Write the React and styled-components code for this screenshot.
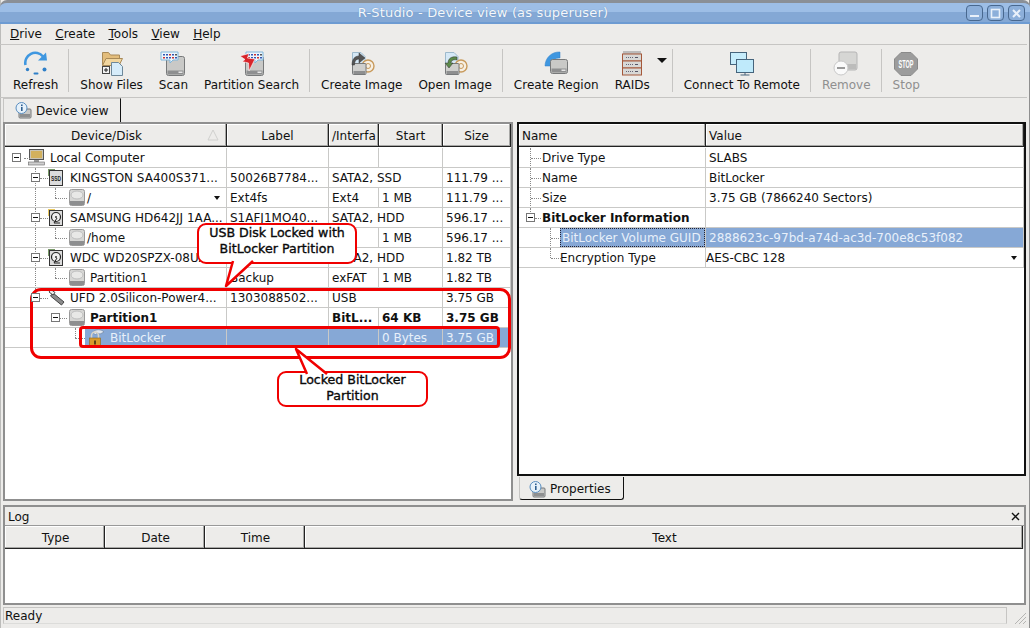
import React from "react";
import styled, { createGlobalStyle } from "styled-components";

const GlobalStyle = createGlobalStyle`
  html, body { margin: 0; padding: 0; background: #edecea; }
  * { box-sizing: border-box; }
`;

const Disk = ({ x = 4, y = 8, w = 18, h = 16, fill = "#c9c9c7" }) => (
  <g>
    <rect x={x} y={y} width={w} height={h} rx="2" fill={fill} stroke="#77797a" />
    <rect x={x + 1} y={y + h - 5} width={w - 2} height="4" fill="#8e8f90" />
    <rect x={x + w - 6} y={y + h - 4} width="4" height="1.5" fill="#e6e6e6" />
  </g>
);

const RefreshIcon = () => (
  <svg width="26" height="26" viewBox="0 0 26 26">
    <path d="M2.5 14 A10 10 0 0 1 20 5.5" fill="none" stroke="#3f97e0" strokeWidth="2.6" />
    <path d="M15 9.5 L24 9.5 L23 1.5 Z" fill="#3f97e0" />
    <circle cx="4.5" cy="18.5" r="1.7" fill="#2f7fc8" />
    <rect x="10.5" y="21.5" width="5" height="2" rx="1" fill="#2f7fc8" />
    <circle cx="21.5" cy="18.5" r="2" fill="#2f7fc8" />
  </svg>
);

const ShowFilesIcon = () => (
  <svg width="26" height="26" viewBox="0 0 26 26">
    <path d="M3.5 1.5 H9.5 L11.5 4 H20.5 V14 H3.5 Z" fill="#e3bd7c" stroke="#a98a58" />
    <path d="M3.5 14.5 L7 7.5 H23.5 L20 14.5 Z" fill="#f1d69f" stroke="#a98a58" />
    <path d="M12.5 11.5 H19.5 L23.5 15.5 V24.5 H12.5 Z" fill="#d6ecfa" stroke="#6d8799" />
    <rect x="3.5" y="15.5" width="7" height="7" fill="#f3f3f3" stroke="#444" />
    <path d="M5 19 H9 M7 17 V21" stroke="#222" />
  </svg>
);

const Bubble = ({ x = 1, y = 0 }) => (
  <g>
    <path
      d={`M${x} ${y + 1} H${x + 17} V${y + 9} H${x + 12} L${x + 9} ${y + 12} V${y + 9} H${x} Z`}
      fill="#eef6fc"
      stroke="#7fb6dc"
    />
    {[2, 5, 8, 11, 14].map((dx, i) => (
      <rect key={dx} x={x + dx} y={y + 3} width="2" height="1.5" fill={["#3157b5", "#3157b5", "#c33", "#3157b5", "#555"][i]} />
    ))}
    {[2, 5, 8, 11, 14].map((dx, i) => (
      <rect key={dx} x={x + dx} y={y + 6} width="2" height="1.5" fill={["#c33", "#3157b5", "#3157b5", "#c33", "#3157b5"][i]} />
    ))}
  </g>
);

const ScanIcon = () => (
  <svg width="26" height="26" viewBox="0 0 26 26">
    <Disk x={6.5} y={5.5} w={18} h={19} />
    <Bubble x={1} y={0} />
  </svg>
);

const SearchIcon = () => (
  <svg width="26" height="26" viewBox="0 0 26 26">
    <Disk x={6.5} y={5.5} w={18} h={19} />
    <Bubble x={7} y={0} />
    <path d="M1 5 L10 2.5 L8.5 7 L16 8 L10 20 L9.5 12 L3 10.5 L6 8.5 Z" fill="#d8242a" stroke="#fff" strokeWidth=".6" />
  </svg>
);

const ImageIcon = ({ arrow, back }) => (
  <svg width="26" height="26" viewBox="0 0 26 26">
    <path d="M3.5 1.5 H12 L16 5.5 V22 H3.5 Z" fill="#d5e8f6" stroke="#9db9cc" />
    <circle cx="19" cy="15" r="6" fill="#f6efe3" stroke="#c89a5c" strokeWidth="1.4" />
    <circle cx="19" cy="15" r="2.5" fill="none" stroke="#c89a5c" />
    <rect x="3.5" y="12.5" width="13.5" height="11" rx="1" fill="#cfcfcd" stroke="#77797a" />
    <rect x="4.5" y="20" width="11.5" height="3" fill="#8e8f90" />
    <path
      d={back ? "M15 6 C9 5 6 8 6 12 H3 L7 17 L11 12 H9 C9 10 11 8 15 9 Z" : "M3 14 C3 8 6 5 10 5 V2 L16 7 L10 12 V8 C7 8 5.5 10 5.5 14 Z"}
      fill={arrow}
      stroke="#333"
      strokeWidth=".5"
    />
  </svg>
);

const RegionIcon = () => (
  <svg width="26" height="26" viewBox="0 0 26 26">
    <path d="M2 15 A14 14 0 0 1 17 1 V7 A8 8 0 0 0 8 15 Z" fill="#3f97e0" stroke="#2f7fc8" strokeWidth=".5" />
    <Disk x={7.5} y={8.5} w={17} h={14} />
  </svg>
);

const RaidIcon = () => (
  <svg width="26" height="26" viewBox="0 0 26 26">
    <rect x="4" y="0" width="18" height="3" fill="#bbb" />
    {[3, 10, 17].map((y) => (
      <g key={y}>
        <rect x="3.5" y={y} width="19" height="7" fill="#d8d8d6" stroke="#a5583a" />
        <path d={`M7 ${y + 3.5} H14`} stroke="#667" strokeDasharray="1 1" />
        <path d={`M16 ${y + 3.5} H19`} stroke="#556" />
      </g>
    ))}
  </svg>
);

const RemoteIcon = () => (
  <svg width="26" height="26" viewBox="0 0 26 26">
    <rect x="1.5" y="1.5" width="16" height="12" fill="#c6ecfb" stroke="#46647c" />
    <rect x="7.5" y="8.5" width="17" height="13" fill="#bfeafb" stroke="#46647c" />
    <path d="M16 21 V24 M11.5 24 H20.5" stroke="#46647c" />
  </svg>
);

const RemoveIcon = () => (
  <svg width="26" height="26" viewBox="0 0 26 26">
    <rect x="6" y="1" width="18" height="18" rx="2" fill="#d6d6d4" stroke="#b5b5b5" />
    <rect x="7" y="13" width="16" height="5" fill="#bcbcbb" />
    <circle cx="8" cy="17" r="7" fill="#fafafa" stroke="#c9c9c9" />
    <rect x="4" y="16" width="8" height="2" fill="#9a9a9a" />
  </svg>
);

const StopIcon = () => (
  <svg width="26" height="26" viewBox="0 0 26 26">
    <path d="M8 1.5 H18 L24.5 8 V18 L18 24.5 H8 L1.5 18 V8 Z" fill="#9c9c9c" stroke="#8a8a8a" />
    <text
      x="23.6"
      y="17"
      transform="scale(.55 1)"
      textAnchor="middle"
      fontSize="10"
      fontWeight="700"
      fontFamily="Liberation Sans, sans-serif"
      fill="#fff"
    >
      STOP
    </text>
  </svg>
);

const InfoDiskIcon = () => (
  <svg width="17" height="17" viewBox="0 0 17 17">
    <rect x="4" y="7" width="12" height="9" rx="1" fill="#c9c9c7" stroke="#77797a" />
    <rect x="5" y="12" width="10" height="3" fill="#8e8f90" />
    <circle cx="6.5" cy="6" r="5.5" fill="#e6f1fa" stroke="#5a8ec0" />
    <rect x="6" y="5" width="1.6" height="4" fill="#2f5f90" />
    <rect x="6" y="2.5" width="1.6" height="1.6" fill="#2f5f90" />
  </svg>
);

const ComputerIcon = () => (
  <svg width="17" height="17" viewBox="0 0 17 17">
    <rect x="1.5" y="0.5" width="14" height="10" fill="#c9c5b8" stroke="#555" />
    <rect x="3" y="2" width="11" height="7" fill="#d2b15e" />
    <rect x="6" y="11" width="5" height="2" fill="#999" />
    <rect x="0.5" y="13" width="16" height="3" fill="#cfcfcf" stroke="#666" strokeWidth=".6" />
  </svg>
);

const DriveIcon = ({ ssd, tint }) => (
  <svg width="16" height="17" viewBox="0 0 16 17">
    <rect x="0" y="0" width="7" height="7" fill={tint} />
    <rect x="1.5" y="1.5" width="13" height="15" fill="#dcdcdc" stroke="#333" />
    {ssd ? (
      <text
        x="12.3"
        y="12"
        transform="scale(.65 1)"
        textAnchor="middle"
        fontSize="7.5"
        fontWeight="700"
        fontFamily="Liberation Sans, sans-serif"
        fill="#222"
      >
        SSD
      </text>
    ) : (
      <g>
        <circle cx="8" cy="8" r="4.5" fill="#f0f0f0" stroke="#222" strokeWidth="1.2" />
        <circle cx="8" cy="8" r="1" fill="#333" />
        <path d="M12 14 H6 L9 9" fill="none" stroke="#222" />
      </g>
    )}
  </svg>
);

const PartitionIcon = () => (
  <svg width="17" height="17" viewBox="0 0 17 17">
    <rect x="1.5" y="0.5" width="15" height="16" rx="2" fill="#d6d6d4" stroke="#9a9a9a" />
    <ellipse cx="9" cy="6" rx="6" ry="4" fill="#e8e8e6" stroke="#bdbdbd" />
    <rect x="2" y="12" width="14" height="4" fill="#8e8f90" />
  </svg>
);

const UsbIcon = () => (
  <svg width="18" height="17" viewBox="0 0 18 17">
    <path d="M5 4 L16 13 L13.5 16 L2.5 7 Z" fill="#8c8c8c" stroke="#444" />
    <path d="M1 3 L3 0.5 L7 3.5 L5 6 Z" fill="#eee" stroke="#444" />
  </svg>
);

const LockIcon = () => (
  <svg width="18" height="18" viewBox="0 0 18 18">
    <path d="M6 3 C9 0 14 0 17 3 L13 5 C11 4 10 4 8 6 Z" fill="#dfe7f2" stroke="#6b7f99" strokeWidth=".6" />
    <path d="M4.5 9 V6.5 A3.5 3.5 0 0 1 11.5 6.5 V9" fill="none" stroke="#d8d4c8" strokeWidth="1.6" />
    <rect x="2.5" y="9" width="11" height="8.5" fill="#d89a2c" stroke="#8a6420" strokeWidth=".6" />
    <rect x="7" y="11.5" width="2" height="4" fill="#5c4316" />
  </svg>
);

const Window = styled.div`
  position: relative;
  width: 1030px;
  height: 628px;
  overflow: hidden;
  display: flex;
  flex-direction: column;
  background: #edecea;
  box-shadow: inset 1px 0 #bcbcba, inset -1px 0 #8f8f8f;
  font-family: "DejaVu Sans", sans-serif;
  font-size: 12px;
  color: #111;
`;

const TitleBar = styled.div`
  position: relative;
  height: 24px;
  flex: none;
  display: flex;
  align-items: center;
  justify-content: center;
  border-top: 3px solid #8a8f96;
  border-bottom: 2px solid #6d9bd2;
  border-radius: 7px 7px 0 0;
  background: linear-gradient(#9dbee6 0 45%, #84a8d5 45% 100%);
  color: #f4f8fc;
  font-size: 13px;
  letter-spacing: 0.17px;
  padding: 0 64px 1px 0;
  text-shadow: 0 0 1px #5f86b5;
`;

const WindowButtons = styled.div`
  position: absolute;
  right: 5px;
  top: 2px;
  display: flex;
  gap: 4px;
`;

const WindowButton = styled.div`
  width: 17px;
  height: 16px;
  border: 1px solid #48688f;
  border-radius: 4px;
  background: #8cafda;
  display: flex;
  align-items: center;
  justify-content: center;
`;

const MenuBar = styled.div`
  height: 20px;
  flex: none;
  display: flex;
  align-items: center;
  gap: 13.3px;
  padding-left: 10px;
`;

const Toolbar = styled.div`
  height: 54px;
  flex: none;
  display: flex;
  align-items: stretch;
  padding: 4px 0 5px 5px;
  border-top: 1px solid #c6c5c3;
  border-bottom: 1px solid #c6c5c3;
  margin: 0 3px 0 0;
`;

const ToolButton = styled.div`
  display: flex;
  flex-direction: column;
  align-items: center;
  justify-content: space-between;
  padding: 2px 8px 0;
  white-space: nowrap;
  color: ${(p) => (p.$disabled ? "#8f8f8f" : "#111")};
`;

const Separator = styled.div`
  width: 1px;
  margin: 0 3px 0 2px;
  background: #c6c5c3;
`;

const DropArrow = styled.div`
  align-self: center;
  margin: 0 3px 20px -1px;
  width: 0;
  height: 0;
  border-left: 5px solid transparent;
  border-right: 5px solid transparent;
  border-top: 5px solid #111;
`;

const TabStrip = styled.div`
  height: 24px;
  flex: none;
  padding: 0 0 0 3px;
  display: flex;
`;

const Tab = styled.div`
  height: 24px;
  display: flex;
  align-items: center;
  gap: 4px;
  padding: 0 11px;
  background: #edecea;
  border-top: 1px solid #c6c5c3;
  border-left: 1px solid #c6c5c3;
  border-right: 1px solid #111;
`;

const Panes = styled.div`
  height: 379px;
  flex: none;
  display: flex;
  gap: 4px;
  padding-left: 3px;
`;

const DevicePanel = styled.div`
  width: 510px;
  height: 379px;
  border: 2px solid #8f8f8f;
  background: #fff;
`;

const RightColumn = styled.div`
  width: 509px;
  display: flex;
  flex-direction: column;
  gap: 1px;
`;

const PropsPanel = styled.div`
  height: 354px;
  flex: none;
  border: 2px solid #111;
  background: #fff;
`;

const BottomTabs = styled.div`
  display: flex;
  padding-left: 2px;
`;

const BottomTab = styled(Tab)`
  height: 23px;
  width: 105px;
  padding: 2px 0 0 9px;
  border-top: none;
  border-bottom: 1px solid #111;
  border-radius: 0 0 3px 3px;
  justify-content: flex-start;
`;

const HeaderRow = styled.div`
  display: grid;
  grid-template-columns: ${(p) => p.$cols};
  height: 23px;
  margin-bottom: 1px;
  border-bottom: 1px solid #222;
  background: #edecea;
`;

const HeaderCell = styled.div`
  position: relative;
  display: flex;
  align-items: center;
  justify-content: ${(p) => (p.$left ? "flex-start" : "center")};
  padding-top: 2px;
  padding-left: ${(p) => (p.$left ? "3px" : "0")};
  padding-right: ${(p) => p.$right ?? 0}px;
  border-right: 1px solid #222;
  box-shadow: inset -1px -1px 0 #a8a8a6, inset 1px 1px 0 #fff;
  overflow: hidden;
  white-space: nowrap;
`;

const LogHeaderCell = styled(HeaderCell)`
  padding-left: 2px;
`;

const SortMark = styled.svg`
  position: absolute;
  right: 7px;
  top: 5px;
`;

const Row = styled.div`
  display: grid;
  grid-template-columns: ${(p) => p.$cols};
  height: 20px;
  border-bottom: 1px solid #c9c9c7;
  font-weight: ${(p) => (p.$bold ? 700 : 400)};
`;

const Cell = styled.div`
  position: relative;
  display: flex;
  align-items: center;
  grid-column: ${(p) => (p.$wide ? "span 2" : "auto")};
  padding-left: ${(p) => p.$pad ?? 3}px;
  border-right: 1px solid #c9c9c7;
  white-space: nowrap;
  overflow: hidden;
  background: ${(p) => (p.$selected ? "#86a8d6" : "transparent")};
  color: ${(p) => (p.$selected ? "#e8f0fa" : "inherit")};
`;

const TreeCell = styled(Cell)`
  padding-left: ${(p) => p.$left}px;
`;

const TreeLabel = styled.span`
  align-self: stretch;
  flex: 1;
  display: flex;
  align-items: center;
  gap: ${(p) => p.$gap}px;
  padding-left: 2px;
  background: ${(p) => (p.$selected ? "#86a8d6" : "transparent")};
  color: ${(p) => (p.$selected ? "#e8f0fa" : "inherit")};
`;

const SelectedName = styled.span`
  align-self: stretch;
  display: flex;
  align-items: center;
  flex: 1;
  padding-left: 2px;
  background: #86a8d6;
  color: #e8f0fa;
  outline: 1px dotted #223;
  outline-offset: -1px;
`;

const Expander = styled.span`
  position: absolute;
  left: ${(p) => p.$x}px;
  top: 5px;
  width: 9px;
  height: 9px;
  border: 1px solid #777;
  background: #fff;
  z-index: 1;

  &::after {
    content: "";
    position: absolute;
    left: 1px;
    right: 1px;
    top: 3px;
    height: 1px;
    background: #111;
  }
`;

const GuideV = styled.span`
  position: absolute;
  left: ${(p) => p.$x}px;
  top: 0;
  height: ${(p) => p.$h ?? 20}px;
  border-left: 1px dotted #888;
`;

const GuideH = styled.span`
  position: absolute;
  left: ${(p) => p.$x}px;
  top: 10px;
  width: ${(p) => p.$w}px;
  border-top: 1px dotted #888;
`;

const CellArrow = styled.span`
  position: absolute;
  right: 6px;
  top: 8px;
  width: 0;
  height: 0;
  border-left: 3px solid transparent;
  border-right: 3px solid transparent;
  border-top: 4px solid #111;
`;

const LogPanel = styled.div`
  margin: 4px 4px 0 3px;
  height: 100px;
  flex: none;
  border: 2px solid #8f8f8f;
  display: flex;
  flex-direction: column;
`;

const LogTitle = styled.div`
  height: 19px;
  flex: none;
  display: flex;
  align-items: center;
  justify-content: space-between;
  padding: 1px 4px 0 3px;
  border-bottom: 1px solid #999;
`;

const LogBody = styled.div`
  flex: 1;
  background: #fff;
`;

const LogHeader = styled(HeaderRow)`
  grid-template-columns: 100px 100px 100px 1fr;
  margin: 0 1px 0 0;
`;

const StatusBar = styled.div`
  margin: 2px 0 0 3px;
  height: 17px;
  width: 1004px;
  flex: none;
  display: flex;
  align-items: center;
  padding-left: 1px;
  border: 1px solid #c6c5c3;
  border-bottom-color: #dcdcda;
`;

const Grip = styled.svg`
  position: absolute;
  right: 3px;
  bottom: 3px;
`;

const Marker = styled.div`
  position: absolute;
  left: ${(p) => p.$x}px;
  top: ${(p) => p.$y}px;
  width: ${(p) => p.$w}px;
  height: ${(p) => p.$h}px;
  border: 3px solid #f00000;
  border-radius: ${(p) => p.$r}px;
  pointer-events: none;
`;

const Callout = styled.div`
  position: absolute;
  left: ${(p) => p.$x}px;
  top: ${(p) => p.$y}px;
  width: ${(p) => p.$w}px;
  height: ${(p) => p.$h}px;
  padding-bottom: ${(p) => p.$lift}px;
  display: flex;
  align-items: center;
  justify-content: center;
  text-align: center;
  background: #fff;
  border: 2.5px solid #f00000;
  border-radius: 9px;
  font-size: 12.6px;
  -webkit-text-stroke: 0.35px #0a0a0a;
  line-height: 16px;
  color: #0a0a0a;
`;

const Tail = styled.svg`
  position: absolute;
  overflow: visible;
  left: ${(p) => p.$x}px;
  top: ${(p) => p.$y}px;
`;

const treeCols = "222px 102px 50px 64px 1fr";
const propCols = "187px 1fr";

const Toolbuttons = [
  [<RefreshIcon />, "Refresh"],
  "sep",
  [<ShowFilesIcon />, "Show Files"],
  [<ScanIcon />, "Scan"],
  [<SearchIcon />, "Partition Search"],
  "sep",
  [<ImageIcon arrow="#555" />, "Create Image"],
  [<ImageIcon arrow="#5c8a4a" back />, "Open Image"],
  "sep",
  [<RegionIcon />, "Create Region"],
  [<RaidIcon />, "RAIDs"],
  "arrow",
  "sep",
  [<RemoteIcon />, "Connect To Remote"],
  "sep",
  [<RemoveIcon />, "Remove", true],
  "sep",
  [<StopIcon />, "Stop", true],
];

const DeviceRows = [
  { icon: <ComputerIcon />, name: "Local Computer", left: 21, gap: 5, exp: 11, hline: [19, 6], vlines: [], cells: ["", "", "", ""] },
  { icon: <DriveIcon ssd tint="#7a9a6a" />, name: "KINGSTON SA400S371...", left: 41, gap: 6, exp: 30, hline: [35, 8], vlines: [[30, 20]], cells: ["50026B7784...", "SATA2, SSD", "", "111.79 ..."], span: true },
  { icon: <PartitionIcon />, name: "/", left: 61, gap: 2, hline: [50, 12], vlines: [[30, 20], [50, 10]], cells: ["Ext4fs", "Ext4", "1 MB", "111.79 ..."], arrow: true },
  { icon: <DriveIcon tint="#e8c860" />, name: "SAMSUNG HD642JJ 1AA...", left: 41, gap: 6, exp: 30, hline: [35, 8], vlines: [[30, 20]], cells: ["S1AFJ1MO40...", "SATA2, HDD", "", "596.17 ..."], span: true },
  { icon: <PartitionIcon />, name: "/home", left: 61, gap: 2, hline: [50, 12], vlines: [[30, 20], [50, 10]], cells: ["", "", "1 MB", "596.17 ..."] },
  { icon: <DriveIcon tint="#7a9a6a" />, name: "WDC WD20SPZX-08UA...", left: 41, gap: 6, exp: 30, hline: [35, 8], vlines: [[30, 20]], cells: ["", "SATA2, HDD", "", "1.82 TB"], span: true },
  { icon: <PartitionIcon />, name: "Partition1", left: 61, gap: 5, hline: [50, 12], vlines: [[30, 20], [50, 10]], cells: ["Backup", "exFAT", "1 MB", "1.82 TB"] },
  { icon: <UsbIcon />, name: "UFD 2.0Silicon-Power4...", left: 41, gap: 4, exp: 30, hline: [35, 8], vlines: [[30, 10]], cells: ["1303088502...", "USB", "", "3.75 GB"], span: true },
  { icon: <PartitionIcon />, name: "Partition1", left: 61, gap: 5, exp: 50, hline: [55, 7], vlines: [], cells: ["", "BitL...", "64 KB", "3.75 GB"], bold: true },
  { icon: <LockIcon />, name: "BitLocker", left: 80, gap: 5, hline: [70, 10], vlines: [[70, 10]], cells: ["", "", "0 Bytes", "3.75 GB"], selected: true },
];

const PropRows = [
  { name: "Drive Type", value: "SLABS", level: 1, guide: 11 },
  { name: "Name", value: "BitLocker", level: 1, guide: 11 },
  { name: "Size", value: "3.75 GB (7866240 Sectors)", level: 1, guide: 11 },
  { name: "BitLocker Information", value: "", level: 1, exp: true },
  { name: "BitLocker Volume GUID", value: "2888623c-97bd-a74d-ac3d-700e8c53f082", level: 2, guide: 31, selected: true },
  { name: "Encryption Type", value: "AES-CBC 128", level: 2, guide: 31, last: true },
];

const App = () => {
  return (
    <Window>
      <GlobalStyle />
      <TitleBar>
        R-Studio - Device view (as superuser)
        <WindowButtons>
          <WindowButton>
            <svg width="11" height="11" viewBox="0 0 11 11"><rect x="1" y="7" width="9" height="2" fill="#e8f0fa" /></svg>
          </WindowButton>
          <WindowButton>
            <svg width="11" height="11" viewBox="0 0 11 11"><rect x="1.5" y="1.5" width="8" height="8" fill="none" stroke="#e8f0fa" strokeWidth="1.6" /></svg>
          </WindowButton>
          <WindowButton>
            <svg width="11" height="11" viewBox="0 0 11 11"><path d="M2 2 L9 9 M9 2 L2 9" stroke="#e8f0fa" strokeWidth="2" /></svg>
          </WindowButton>
        </WindowButtons>
      </TitleBar>

      <MenuBar>
        {["Drive", "Create", "Tools", "View", "Help"].map((m) => (
          <span key={m}>
            <u>{m[0]}</u>
            {m.slice(1)}
          </span>
        ))}
      </MenuBar>

      <Toolbar>
        {Toolbuttons.map((b, i) => {
          if (b === "sep") return <Separator key={i} />;
          if (b === "arrow") return <DropArrow key={i} />;
          return (
            <ToolButton key={i} $disabled={b[2]}>
              {b[0]}
              <span>{b[1]}</span>
            </ToolButton>
          );
        })}
      </Toolbar>

      <TabStrip>
        <Tab>
          <InfoDiskIcon />
          Device view
        </Tab>
      </TabStrip>

      <Panes>
        <DevicePanel>
          <HeaderRow $cols={treeCols}>
            <HeaderCell $right={18}>
              Device/Disk
              <SortMark width="12" height="12" viewBox="0 0 12 12">
                <path d="M6 1 L11 11 H1 Z" fill="none" stroke="#d0d0ce" />
              </SortMark>
            </HeaderCell>
            <HeaderCell>Label</HeaderCell>
            <HeaderCell $left>/Interfa</HeaderCell>
            <HeaderCell>Start</HeaderCell>
            <HeaderCell>Size</HeaderCell>
          </HeaderRow>
          {DeviceRows.map((r) => (
            <Row key={r.name + r.left} $cols={treeCols} $bold={r.bold}>
              <TreeCell $left={r.left}>
                {r.vlines.map(([x, h]) => (
                  <GuideV key={x} $x={x} $h={h} />
                ))}
                <GuideH $x={r.hline[0]} $w={r.hline[1]} />
                {r.exp !== undefined && <Expander $x={r.exp - 4} />}
                <TreeLabel $gap={r.gap} $selected={r.selected}>
                  {r.icon}
                  <span>{r.name}</span>
                </TreeLabel>
                {r.arrow && <CellArrow />}
              </TreeCell>
              <Cell $selected={r.selected}>{r.cells[0]}</Cell>
              {r.span ? (
                <Cell $wide>{r.cells[1]}</Cell>
              ) : (
                <>
                  <Cell $selected={r.selected}>{r.cells[1]}</Cell>
                  <Cell $selected={r.selected}>{r.cells[2]}</Cell>
                </>
              )}
              <Cell $selected={r.selected}>{r.cells[3]}</Cell>
            </Row>
          ))}
        </DevicePanel>

        <RightColumn>
          <PropsPanel>
            <HeaderRow $cols={propCols}>
              <HeaderCell $left>Name</HeaderCell>
              <HeaderCell $left>Value</HeaderCell>
            </HeaderRow>
            {PropRows.map((r) => (
              <Row key={r.name} $cols={propCols}>
                <TreeCell $left={r.level === 1 ? 23 : 41}>
                  {r.guide && <GuideV $x={r.guide} $h={r.last ? 10 : 20} />}
                  {r.guide && <GuideH $x={r.guide + 1} $w={10} />}
                  {r.exp && <GuideV $x={11} $h={6} />}
                  {r.exp && <Expander $x={7} />}
                  {r.exp && <GuideH $x={16} $w={6} />}
                  {r.selected ? (
                    <SelectedName>{r.name}</SelectedName>
                  ) : r.exp ? (
                    <b>{r.name}</b>
                  ) : (
                    r.name
                  )}
                </TreeCell>
                <Cell $selected={r.selected} $pad={r.last ? 0 : 3}>
                  {r.value}
                  {r.last && <CellArrow />}
                </Cell>
              </Row>
            ))}
          </PropsPanel>
          <BottomTabs>
            <BottomTab>
              <InfoDiskIcon />
              Properties
            </BottomTab>
          </BottomTabs>
        </RightColumn>
      </Panes>

      <LogPanel>
        <LogTitle>
          Log
          <svg width="9" height="9" viewBox="0 0 9 9">
            <path d="M1 1 L8 8 M8 1 L1 8" stroke="#111" strokeWidth="1.4" />
          </svg>
        </LogTitle>
        <LogHeader>
          <LogHeaderCell>Type</LogHeaderCell>
          <LogHeaderCell>Date</LogHeaderCell>
          <LogHeaderCell>Time</LogHeaderCell>
          <LogHeaderCell>Text</LogHeaderCell>
        </LogHeader>
        <LogBody />
      </LogPanel>

      <StatusBar>Ready</StatusBar>
      <Grip width="14" height="14" viewBox="0 0 14 14">
        <path d="M13 2 L2 13 M13 6 L6 13 M13 10 L10 13" stroke="#b5b5b3" />
      </Grip>

      <Marker $x={30} $y={288} $w={481} $h={71} $r={11} />
      <Marker $x={79} $y={326} $w={421} $h={22} $r={4} />

      <Callout $x={197} $y={223} $w={160} $h={41} $lift={6}>
        USB Disk Locked with
        <br />
        BitLocker Partition
        <Tail $x={32} $y={36} width="30" height="30">
          <path d="M2 0 L-5 25 L22 0" fill="#fff" stroke="#f00000" strokeWidth="2.5" strokeLinejoin="round" />
        </Tail>
      </Callout>
      <Callout $x={277} $y={371} $w={151} $h={36} $lift={2}>
        Locked BitLocker
        <br />
        Partition
        <Tail $x={26} $y={-24} width="30" height="30">
          <path d="M2 25 L-9 0 L22 25" fill="#fff" stroke="#f00000" strokeWidth="2.5" strokeLinejoin="round" />
        </Tail>
      </Callout>
    </Window>
  );
};

export default App;
